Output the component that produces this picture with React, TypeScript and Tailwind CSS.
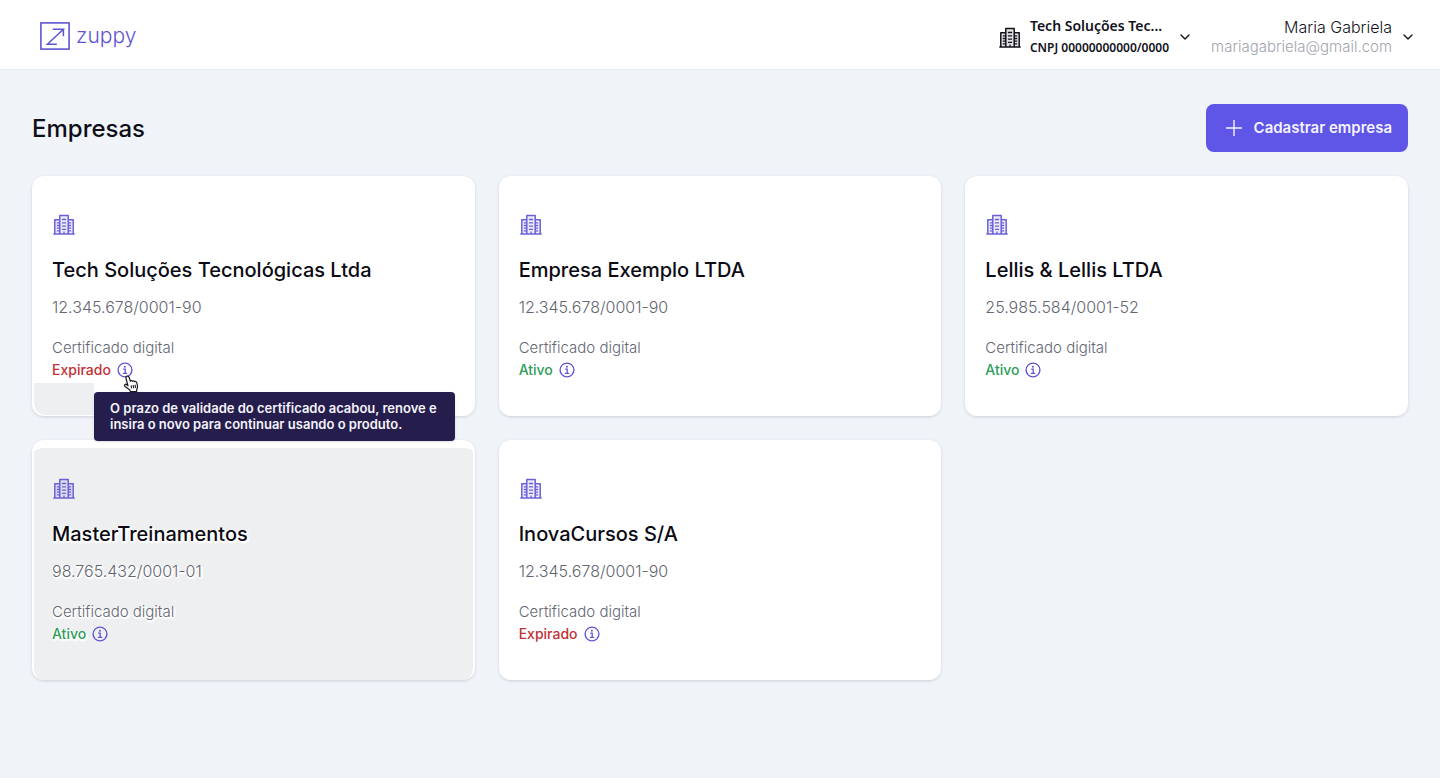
import { ChevronDown } from "lucide-react";

type Company = {
  name: string;
  cnpj: string;
  status: "Ativo" | "Expirado";
  hovered?: boolean;
  message?: string;
};

const companies: Company[] = [
  {
    name: "Tech Soluções Tecnológicas Ltda",
    cnpj: "12.345.678/0001-90",
    status: "Expirado",
    message:
      "O prazo de validade do certificado acabou, renove e insira o novo para continuar usando o produto.",
  },
  { name: "Empresa Exemplo LTDA", cnpj: "12.345.678/0001-90", status: "Ativo" },
  { name: "Lellis & Lellis LTDA", cnpj: "25.985.584/0001-52", status: "Ativo" },
  { name: "MasterTreinamentos", cnpj: "98.765.432/0001-01", status: "Ativo", hovered: true },
  { name: "InovaCursos S/A", cnpj: "12.345.678/0001-90", status: "Expirado" },
];

function BuildingIcon({ className }: { className: string }) {
  return (
    <svg viewBox="0 0 24 24" fill="none" stroke="currentColor" strokeWidth="1.5" className={className} aria-hidden="true">
      <path d="M2.8 7.2h5V3h8.4v4.2h5V21.8H2.8z" fill="currentColor" fillOpacity="0.12" stroke="none" />
      <path d="M1.3 22h21.4M2.8 22V7.7h5M21.2 22V7.7h-5M7.8 22V3.6h8.4V22" strokeLinejoin="round" />
      <path d="M9.9 7.5h4.2M9.9 10.8h4.2M9.9 14.1h4.2M9.9 17.3h4.2M12 19.4V22M4.8 10.8h3M4.8 13.5h3M4.8 16.2h3M4.8 18.9h3M16.2 10.8h3M16.2 13.5h3M16.2 16.2h3M16.2 18.9h3" strokeWidth="1.3" />
    </svg>
  );
}

function InfoIcon() {
  return (
    <svg viewBox="0 0 16 16" fill="none" stroke="currentColor" strokeWidth="1.4" className="size-4" aria-hidden="true">
      <circle cx="8" cy="8" r="6.9" />
      <path d="M6.2 7.1h2v4M5.9 11.4h4.3" strokeWidth="1.3" />
      <circle cx="7.9" cy="4.7" r="1" fill="currentColor" stroke="none" />
    </svg>
  );
}

function HandPointer() {
  return (
    <svg viewBox="0 0 16 18" className="pointer-events-none absolute top-[15px] left-[71px] z-30 h-[18px] w-4" aria-hidden="true">
      <path
        d="M4.2 1.2c.9-.3 1.6.2 1.9 1.1l1.3 4 .3-.5c.7-.5 1.6-.2 1.9.5.6-.6 1.7-.4 2 .4.7-.5 1.7-.2 2 .7l.8 3c.3 1.3.1 2.4-.5 3.5l-.3 2.7H7.4l-.8-1.8L2 11.4c-.6-.7-.5-1.6.1-2 .6-.4 1.3-.1 1.9.5l1 .9L2.9 3c-.3-.9.3-1.6 1.3-1.8Z"
        fill="white"
        stroke="#17171f"
        strokeWidth="1.2"
        strokeLinejoin="round"
      />
      <path d="M8.1 10.4l.5 3M10.2 10l.4 3.3M12.2 9.8l.2 3.2" stroke="#17171f" strokeWidth="1.1" />
    </svg>
  );
}

function CompanyCard({ company }: { company: Company }) {
  const { name, cnpj, status, hovered, message } = company;
  return (
    <article
      className={`relative rounded-xl pb-9 shadow-[0_1px_3px_rgba(30,30,50,0.16)] ${
        hovered
          ? "border-x-2 border-t-8 border-white bg-[#eeeff1] px-[18px] pt-7 [text-shadow:0_1px_1px_white,0_2px_1px_white,2px_1px_1px_white,-1px_0_1px_white,2px_2px_2px_white]"
          : "bg-white px-5 pt-9"
      }`}
    >
      {message && (
        <span className="absolute bottom-px left-0.5 h-8 w-[60px] rounded-bl-xl bg-[#eeeff1]" aria-hidden="true" />
      )}
      <BuildingIcon className="size-6 text-[#6a61d8]" />
      <h2 className="mt-5 text-xl leading-7 font-medium text-[#0b0b14]">{name}</h2>
      <p className="mt-3 text-base leading-[22px] font-light text-[#646773]">{cnpj}</p>
      <p className="mt-5 text-[15px] leading-5 font-light text-[#646773]">Certificado digital</p>
      <div className="relative mt-0.5 flex h-5 items-center gap-1.5">
        <span className={`text-sm font-medium ${status === "Ativo" ? "text-[#2d9d59]" : "text-[#c13236]"}`}>
          {status}
        </span>
        <button type="button" className="text-[#6056d6]" aria-label={`Sobre o certificado: ${name}`}>
          <InfoIcon />
        </button>
        {message && (
          <>
            <div
              role="tooltip"
              className="absolute top-8 left-[42px] z-20 w-[361px] rounded bg-[#251d4c] px-4 pt-2 pb-[9px] text-[13px] leading-4 font-semibold text-[#f4f3fa] shadow-sm"
            >
              {message}
            </div>
            <HandPointer />
          </>
        )}
      </div>
    </article>
  );
}

export default function App() {
  return (
    <div className="min-h-screen bg-[#f0f4f9] font-['Inter','Liberation_Sans',sans-serif] text-[#12121c]">
      <header className="flex h-[70px] items-center justify-between border-b border-[#e9ebf0] bg-white pt-0.5 pr-6 pl-10">
        <a href="#" className="flex items-center gap-1.5 text-[#5f55d3]" aria-label="zuppy">
          <svg viewBox="0 0 30 30" fill="none" stroke="currentColor" strokeWidth="1.6" className="size-[30px]" aria-hidden="true">
            <rect x="0.9" y="1.9" width="28.2" height="26.2" />
            <path d="M12.8 8.3h10.6L7.4 23.3h9.4M23.4 8v7.2" strokeWidth="1.5" />
          </svg>
          <span className="text-[21px] leading-7 font-light">zuppy</span>
        </a>
        <div className="flex items-center gap-[18px] pt-0.5">
          <button type="button" className="flex items-center gap-2 text-left">
            <BuildingIcon className="size-6" />
            <span className="flex flex-col font-['Noto_Sans','Open_Sans',sans-serif] font-semibold">
              <span className="text-sm leading-[22px]">Tech Soluções Tec...</span>
              <span className="text-xs leading-[22px]">CNPJ 00000000000/0000</span>
            </span>
            <ChevronDown className="size-4" />
          </button>
          <button type="button" className="flex items-center gap-2 text-right">
            <span className="flex flex-col">
              <span className="text-base leading-5 font-light">Maria Gabriela</span>
              <span className="text-[15px] leading-5 font-light text-[#a3a5ae]">mariagabriela@gmail.com</span>
            </span>
            <ChevronDown className="size-4" />
          </button>
        </div>
      </header>
      <main className="px-8 pt-[34px] pb-8">
        <div className="flex items-center justify-between">
          <h1 className="pt-0.5 text-2xl font-medium text-[#0e0e18]">Empresas</h1>
          <button type="button" className="flex h-12 items-center gap-3 rounded-lg bg-[#5f55e7] pr-4 pl-5 text-[15px] font-semibold text-[#f4f3fe]">
            <svg viewBox="0 0 16 16" stroke="currentColor" strokeWidth="1.4" className="size-4" aria-hidden="true">
              <path d="M8 0v16M0 8h16" />
            </svg>
            Cadastrar empresa
          </button>
        </div>
        <section className="mt-6 grid grid-cols-3 gap-6" aria-label="Empresas cadastradas">
          {companies.map((company) => (
            <CompanyCard key={company.name} company={company} />
          ))}
        </section>
      </main>
    </div>
  );
}
